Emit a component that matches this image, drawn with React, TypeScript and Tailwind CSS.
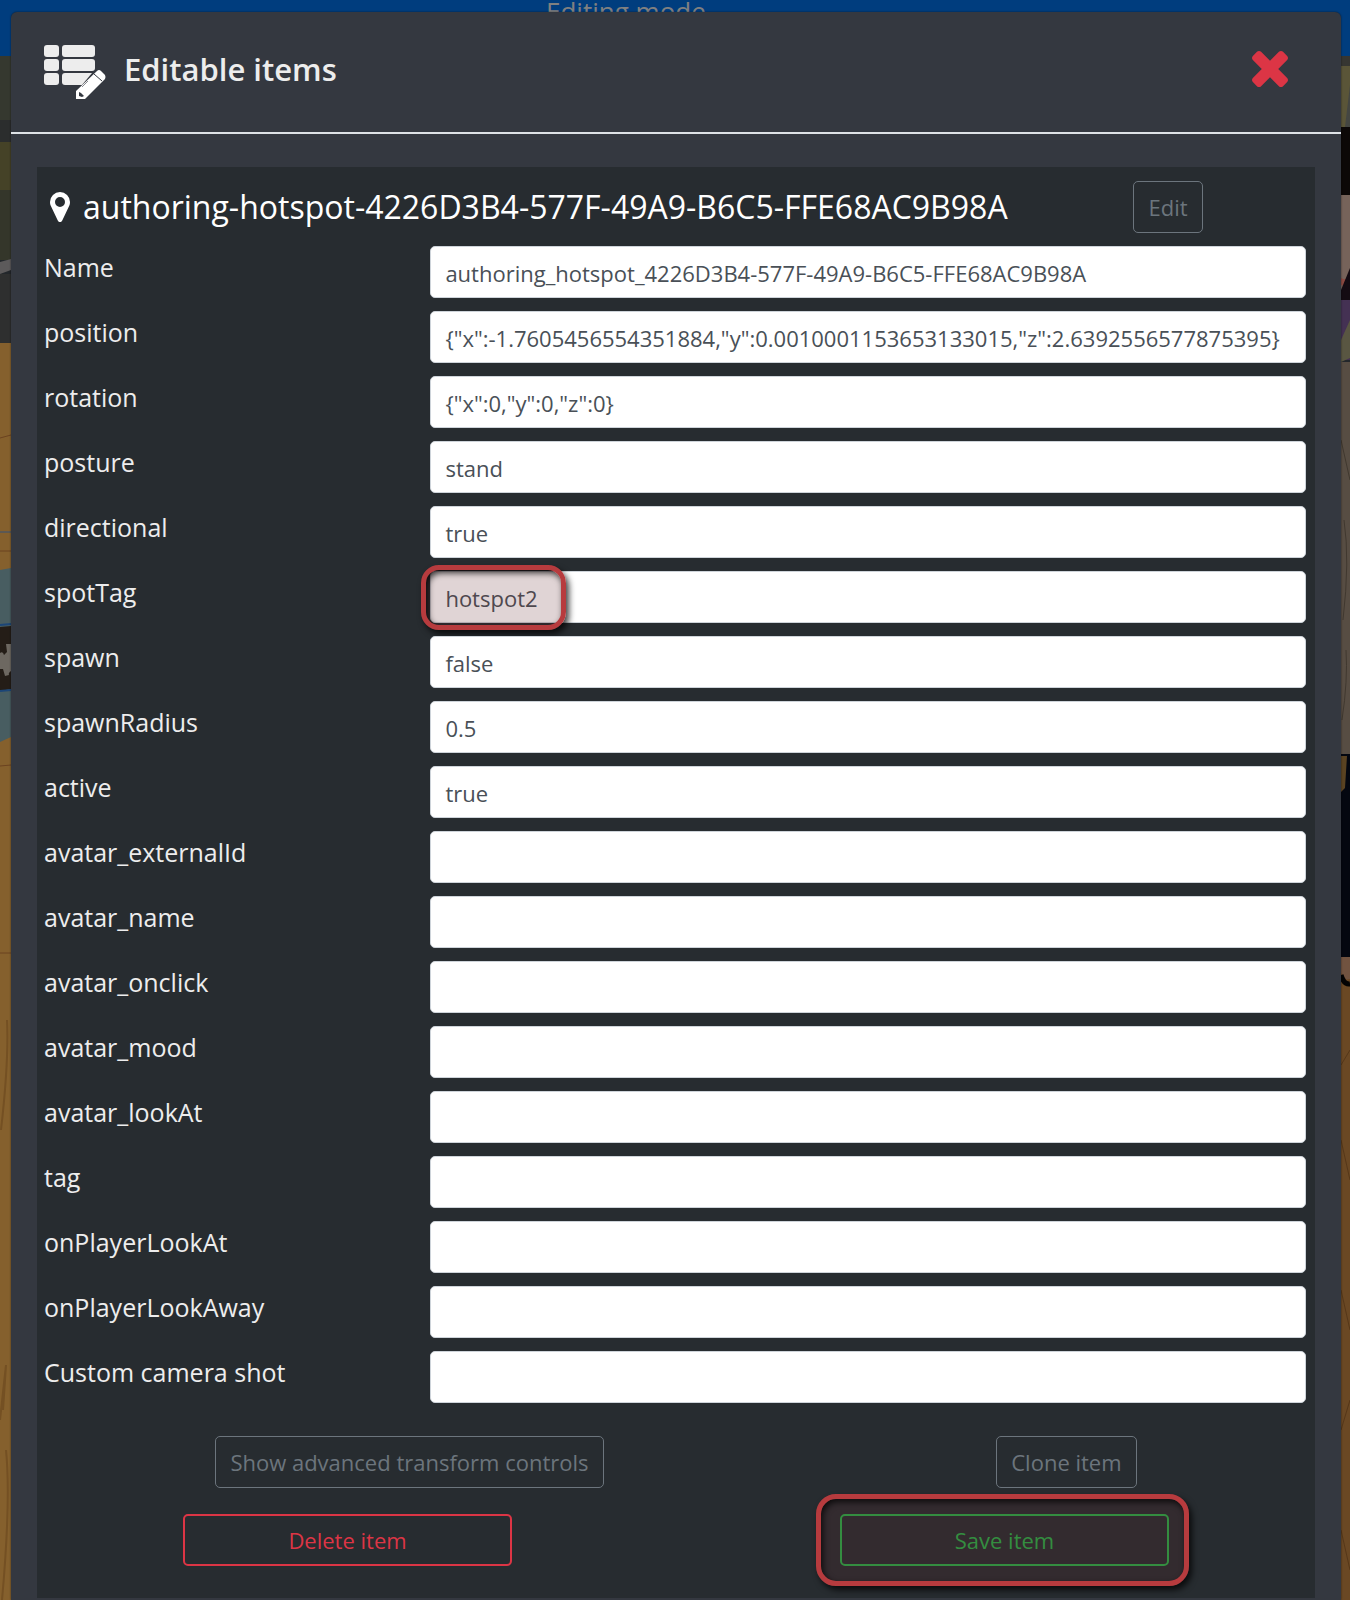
import React from 'react';

interface Field {
  name: string;
  value: string;
  highlighted?: boolean;
}

const fields: Field[] = [
  { name: 'Name', value: 'authoring_hotspot_4226D3B4-577F-49A9-B6C5-FFE68AC9B98A' },
  { name: 'position', value: '{"x":-1.7605456554351884,"y":0.0010001153653133015,"z":2.6392556577875395}' },
  { name: 'rotation', value: '{"x":0,"y":0,"z":0}' },
  { name: 'posture', value: 'stand' },
  { name: 'directional', value: 'true' },
  { name: 'spotTag', value: 'hotspot2', highlighted: true },
  { name: 'spawn', value: 'false' },
  { name: 'spawnRadius', value: '0.5' },
  { name: 'active', value: 'true' },
  { name: 'avatar_externalId', value: '' },
  { name: 'avatar_name', value: '' },
  { name: 'avatar_onclick', value: '' },
  { name: 'avatar_mood', value: '' },
  { name: 'avatar_lookAt', value: '' },
  { name: 'tag', value: '' },
  { name: 'onPlayerLookAt', value: '' },
  { name: 'onPlayerLookAway', value: '' },
  { name: 'Custom camera shot', value: '' },
];

const ListEditIcon = () => (
  <svg width="62" height="64" viewBox="0 -8 62 64" aria-hidden="true">
    <g fill="#ededed">
      <rect x="0" y="0" width="15" height="12" rx="3" />
      <rect x="18" y="0" width="33" height="12" rx="3" />
      <rect x="0" y="14" width="15" height="12" rx="3" />
      <rect x="18" y="14" width="33" height="12" rx="3" />
      <rect x="0" y="28" width="15" height="12" rx="3" />
      <path d="M21 28h27L38 40H21a3 3 0 0 1-3-3v-6a3 3 0 0 1 3-3z" />
    </g>
    <path d="M32 46 53 26q2-2 4 0l4 4q1 2 0 4L41 54h-9z" fill="#fff" />
    <path d="m50 29 8 7" stroke="#343840" strokeWidth="1" fill="none" />
    <path d="m38 42 6-6" stroke="#8b8d92" strokeWidth="1" fill="none" />
    <path d="m35 47 2 1 3 3-2 1-3-1z" fill="#343840" />
  </svg>
);

const MarkerIcon = () => (
  <svg width="20" height="30" viewBox="384 128 1024 1536" fill="currentColor" aria-hidden="true">
    <path d="M1152 640q0-106-75-181t-181-75-181 75-75 181 75 181 181 75 181-75 75-181zm256 0q0 109-33 179l-364 774q-16 33-47.5 52t-67.5 19-67.5-19-46.5-52l-365-774q-33-70-33-179 0-212 150-362t362-150 362 150 150 362z" />
  </svg>
);

const CloseIcon = () => (
  <svg width="36" height="36" viewBox="302 366 1188 1188" fill="currentColor" aria-hidden="true">
    <path d="M1490 1322q0 40-28 68l-136 136q-28 28-68 28t-68-28l-294-294-294 294q-28 28-68 28t-68-28l-136-136q-28-28-28-68t28-68l294-294-294-294q-28-28-28-68t28-68l136-136q28-28 68-28t68 28l294 294 294-294q28-28 68-28t68 28l136 136q28 28 28 68t-28 68l-294 294 294 294q28 28 28 68z" />
  </svg>
);

// 3D scene that stays visible on both sides of the dialog
const LeftScene = () => (
  <svg className="h-full w-[11px]" viewBox="0 56 11 1544" preserveAspectRatio="none" aria-hidden="true">
    <rect y="56" width="11" height="64" fill="#35382f" />
    <rect y="120" width="11" height="22" fill="#2b2d2d" />
    <rect y="142" width="11" height="48" fill="#454227" />
    <rect y="190" width="11" height="70" fill="#34362a" />
    <path d="M0 262 11 259V270L0 274z" fill="#5c5a5b" />
    <rect y="274" width="11" height="70" fill="#2e2f2f" />
    <rect y="343" width="11" height="1257" fill="#85602d" />
    <path d="M0 438 11 435M0 551h11M0 766 11 765M0 953h11" stroke="#6b4320" />
    <path d="M0 532h11" stroke="#33507a" />
    <path d="M0 570 11 568V737L0 742z" fill="#485d61" />
    <path d="M0 627 11 626V689L0 691z" fill="#241d17" />
    <path d="M0 625 11 624M0 691 11 690" stroke="#1c4677" strokeWidth="2" />
    <path d="M0 653q3-2 4 2l3-3-1-8h5v27q-3 2-2 4l-4 1-2-7H0z" fill="#6d6861" />
    <path d="M1 1130Q9 1060 7 1020M0 1420 6 1365 3 1410M2 1600Q11 1500 6 1450" stroke="#745023" strokeWidth="2" fill="none" />
  </svg>
);

const RightScene = () => (
  <svg className="h-full w-[9px]" viewBox="0 56 9 1544" preserveAspectRatio="none" aria-hidden="true">
    <rect y="56" width="9" height="10" fill="#363632" />
    <path d="M0 66h9v70H0z" fill="#5a5538" />
    <path d="M4 127 9 85v42z" fill="#444642" />
    <rect y="127" width="9" height="68" fill="#0c0807" />
    <rect y="195" width="9" height="105" fill="#76635a" />
    <path d="M0 278q5 3 9-2v8q-5 3-9 1z" fill="#8b4941" />
    <path d="M0 290 9 268v40L0 300z" fill="#140b12" />
    <rect y="300" width="9" height="60" fill="#443153" />
    <path d="M0 340 9 320v38l-9 4z" fill="#595642" />
    <rect y="362" width="9" height="392" fill="#574d43" />
    <path d="M0 440 9 480M2 620Q9 560 3 520M1 720Q7 680 5 650" stroke="#40382f" fill="none" />
    <rect y="754" width="9" height="203" fill="#040710" />
    <path d="M0 756h6l-2 32-4 4z" fill="#5a4322" />
    <rect y="957" width="9" height="643" fill="#6a4824" />
    <path d="M0 957h9v22q-6 2-9-6z" fill="#715340" />
    <path d="M0 975q3 10 9 9" stroke="#030303" strokeWidth="5" fill="none" />
    <path d="M0 1065 9 1050M0 1140 9 1180M0 1290 9 1330M0 1430 9 1400M0 1530 9 1570" stroke="#553719" />
  </svg>
);

const Highlight = ({ className }: { className: string }) => (
  <span
    className={`pointer-events-none absolute border-[5px] border-[#b73b3e] bg-[#64282b]/20 shadow-[3px_4px_6px_rgba(0,0,0,0.75),inset_2px_3px_6px_rgba(0,0,0,0.75)] ${className}`}
  />
);

const FieldRow = ({ name, value, highlighted }: Field) => (
  <div className="flex">
    <label htmlFor={name} className="w-[30%] pl-[7px] text-[25px] leading-[42px] text-[#ededed]">
      {name}
    </label>
    <div className="relative flex-1 pr-[9px] pl-[10px]">
      <input
        id={name}
        type="text"
        defaultValue={value}
        className="block h-[52px] w-full rounded-[5px] border border-[#ced4da] bg-white px-[14px] pt-px text-[22px] text-[#495057]"
      />
      {highlighted && <Highlight className="-top-1.5 left-px h-[65px] w-[145px] rounded-[18px]" />}
    </div>
  </div>
);

const OutlineButton = ({ children }: { children: React.ReactNode }) => (
  <button
    type="button"
    className="h-[52px] rounded-[5px] border border-[#6c757d] px-[14px] text-[22px] text-[#6c757d]"
  >
    {children}
  </button>
);

const App = () => {
  return (
    <div className="relative flex min-h-screen flex-col bg-[#23272b] font-['Open_Sans','Noto_Sans',sans-serif]">
      <div className="absolute inset-0 flex flex-col">
        <div className="h-14 bg-[#003d7e] pl-[546px] text-[26px] leading-[22px] text-[#808080]">Editing mode</div>
        <div className="flex min-h-0 flex-1 justify-between">
          <LeftScene />
          <RightScene />
        </div>
      </div>

      <div
        role="dialog"
        aria-labelledby="dialog-title"
        className="relative mt-3 mr-[9px] ml-[11px] flex-1 rounded-t-[6px] bg-[#343840] shadow-[0_0_2px_rgba(0,0,0,0.6)]"
      >
        <header className="flex h-[122px] items-center border-b-2 border-[#dee2e6] pr-[53px] pb-1.5 pl-[33px]">
          <ListEditIcon />
          <h1 id="dialog-title" className="ml-[18px] flex-1 text-[31px] font-semibold text-[#ededed]">Editable items</h1>
          <button type="button" aria-label="Close" className="text-[#dc3545]">
            <CloseIcon />
          </button>
        </header>

        <main className="px-[26px] pt-[33px]">
          <section className="bg-[#272c30] pt-[14px] pb-8">
            <div className="mb-[13px] flex items-center">
              <h2 className="flex flex-1 items-center gap-[13px] pl-[13px] text-[32px] leading-[52px] whitespace-nowrap text-white">
                <MarkerIcon />
                authoring-hotspot-4226D3B4-577F-49A9-B6C5-FFE68AC9B98A
              </h2>
              <div className="flex w-[23%] justify-center">
                <OutlineButton>Edit</OutlineButton>
              </div>
            </div>

            <form>
              <div className="flex flex-col gap-[13px]">
                {fields.map((field) => (
                  <FieldRow key={field.name} {...field} />
                ))}
              </div>

              <div className="-mx-[18px] mt-[33px] flex justify-around">
                <OutlineButton>Show advanced transform controls</OutlineButton>
                <OutlineButton>Clone item</OutlineButton>
              </div>
              <div className="-mx-[18px] mt-[26px] flex justify-around">
                <button type="button" className="h-[52px] w-1/4 rounded-[5px] border-2 border-[#dc3545] text-[22px] text-[#dc3545]">
                  Delete item
                </button>
                <div className="relative w-1/4">
                  <button type="button" className="h-[52px] w-full rounded-[5px] border-2 border-[#28a745] text-[22px] text-[#28a745]">
                    Save item
                  </button>
                  <Highlight className="-inset-y-5 -right-5 -left-6 rounded-[20px]" />
                </div>
              </div>
            </form>
          </section>
        </main>
      </div>
    </div>
  );
};

export default App;
